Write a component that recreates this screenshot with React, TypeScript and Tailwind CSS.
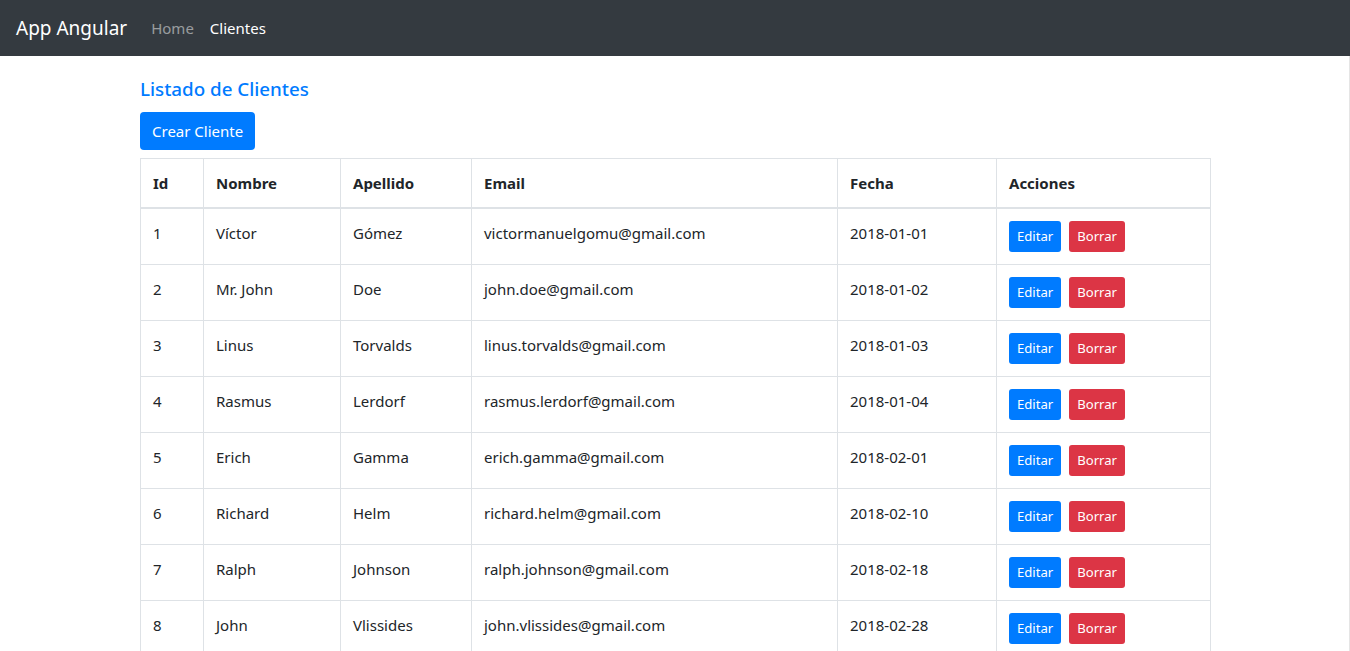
import React from "react";

const rows = [
  { id: 1, nombre: "Víctor", apellido: "Gómez", email: "victormanuelgomu@gmail.com", fecha: "2018-01-01" },
  { id: 2, nombre: "Mr. John", apellido: "Doe", email: "john.doe@gmail.com", fecha: "2018-01-02" },
  { id: 3, nombre: "Linus", apellido: "Torvalds", email: "linus.torvalds@gmail.com", fecha: "2018-01-03" },
  { id: 4, nombre: "Rasmus", apellido: "Lerdorf", email: "rasmus.lerdorf@gmail.com", fecha: "2018-01-04" },
  { id: 5, nombre: "Erich", apellido: "Gamma", email: "erich.gamma@gmail.com", fecha: "2018-02-01" },
  { id: 6, nombre: "Richard", apellido: "Helm", email: "richard.helm@gmail.com", fecha: "2018-02-10" },
  { id: 7, nombre: "Ralph", apellido: "Johnson", email: "ralph.johnson@gmail.com", fecha: "2018-02-18" },
  { id: 8, nombre: "John", apellido: "Vlissides", email: "john.vlissides@gmail.com", fecha: "2018-02-28" },
];

const cell = "border border-[#dee2e6] px-3 pt-3 pb-3 align-top";

export default function App() {
  return (
    <div
      className="h-[651px] overflow-hidden bg-white text-[#212529] text-[15px] leading-[24px]"
      style={{ fontFamily: '"Noto Sans", "Open Sans", sans-serif' }}
    >
      <nav className="flex h-[56px] items-center bg-[#343a40] px-4">
        <span className="mr-4 text-[19px] leading-[30px] text-white">App Angular</span>
        <div className="flex">
          <span className="px-2 text-[rgba(255,255,255,0.5)]">Home</span>
          <span className="px-2 text-white">Clientes</span>
        </div>
      </nav>
      <div className="h-full border-r border-[#e5e5e5]">
        <div className="ml-[140px] w-[1070px] pt-[21px]">
          <h5 className="mb-[11px] text-[18.75px] leading-[24px] font-medium text-[#007bff]">Listado de Clientes</h5>
          <button className="mb-2 h-[38px] rounded-[4px] bg-[#007bff] px-3 text-white">Crear Cliente</button>
          <table className="w-[1070px] border-collapse table-fixed">
            <colgroup>
              <col className="w-[63px]" />
              <col className="w-[137px]" />
              <col className="w-[131px]" />
              <col className="w-[366px]" />
              <col className="w-[159px]" />
              <col className="w-[214px]" />
            </colgroup>
            <thead>
              <tr className="text-left">
                {["Id", "Nombre", "Apellido", "Email", "Fecha", "Acciones"].map((h) => (
                  <th key={h} className={`${cell} border-b-2 font-bold`}>
                    {h}
                  </th>
                ))}
              </tr>
            </thead>
            <tbody>
              {rows.map((r) => (
                <tr key={r.id}>
                  <td className={cell}>{r.id}</td>
                  <td className={cell}>{r.nombre}</td>
                  <td className={cell}>{r.apellido}</td>
                  <td className={cell}>{r.email}</td>
                  <td className={cell}>{r.fecha}</td>
                  <td className={cell}>
                    <div className="flex gap-2">
                      <button className="h-[31px] rounded-[3px] bg-[#007bff] px-2 text-[13.125px] leading-[21px] text-white">
                        Editar
                      </button>
                      <button className="h-[31px] rounded-[3px] bg-[#dc3545] px-2 text-[13.125px] leading-[21px] text-white">
                        Borrar
                      </button>
                    </div>
                  </td>
                </tr>
              ))}
            </tbody>
          </table>
        </div>
      </div>
    </div>
  );
}
